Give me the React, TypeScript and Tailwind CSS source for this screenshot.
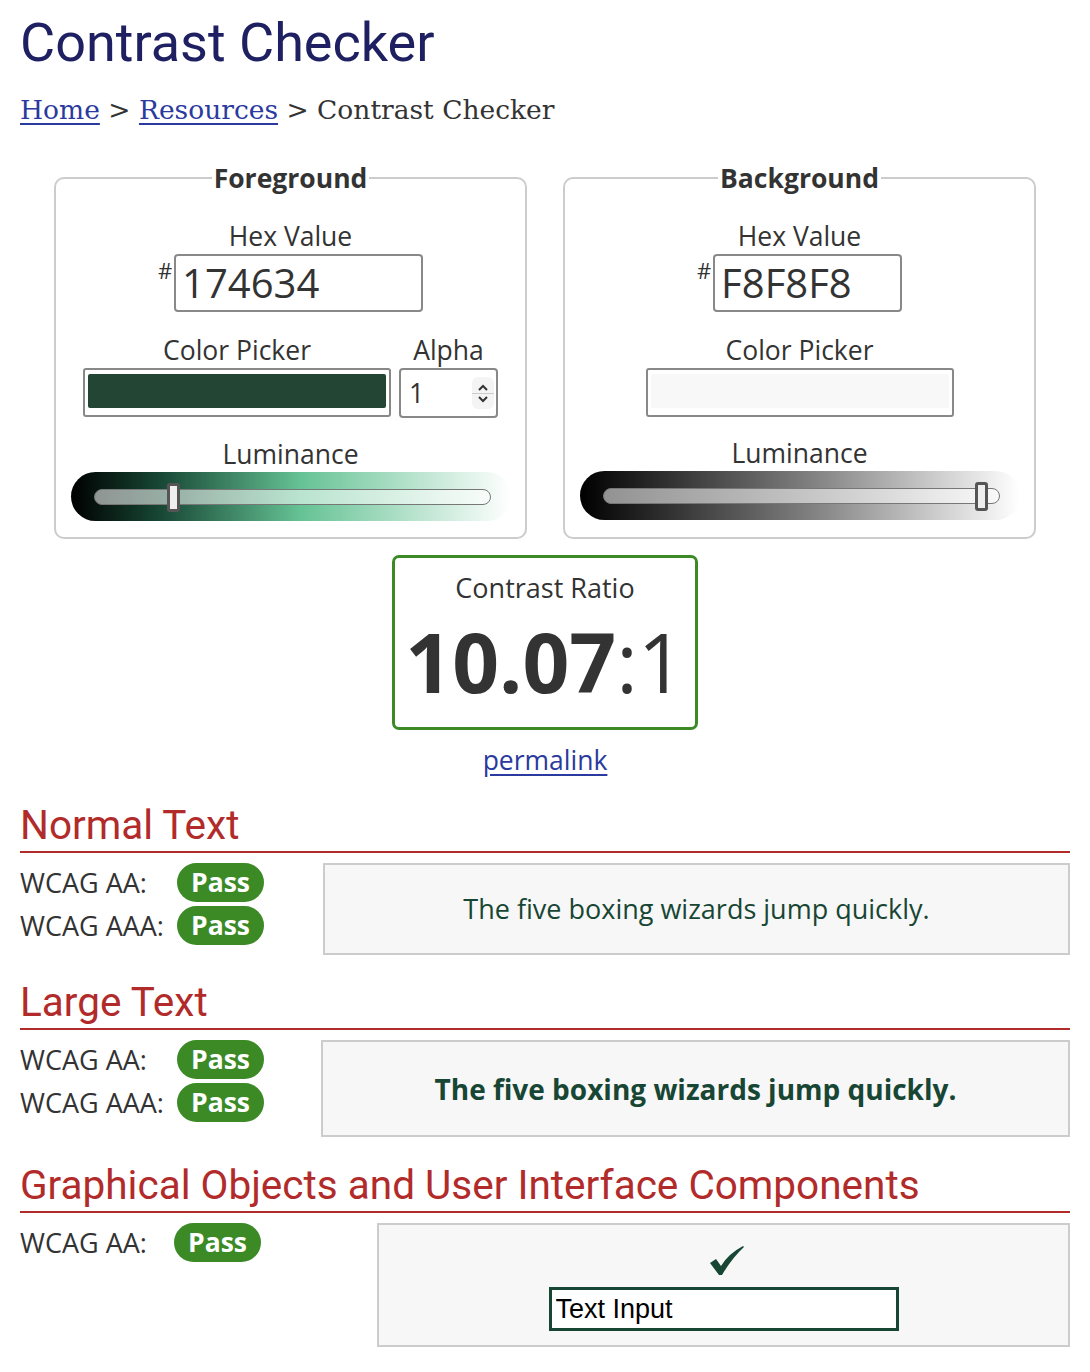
import React from "react";

const SAMPLE = "The five boxing wizards jump quickly.";

function PassBadge() {
  return (
    <span className="inline-flex h-[39px] w-[87px] items-center justify-center rounded-full bg-[#3b8a26] text-[26.5px] font-bold leading-none text-white">
      Pass
    </span>
  );
}

function Slider({ gradient, thumbLeft }: { gradient: string; thumbLeft: number }) {
  return (
    <div className={`mx-auto mt-[3px] flex h-[49px] w-[440px] items-center rounded-full pl-[23px] pr-[20px] ${gradient}`}>
      <div className="relative h-[16px] w-full rounded-full border border-[#777] bg-white/55">
        <span
          className="absolute top-[-7px] h-[29px] w-[13px] rounded-[3px] border-[3px] border-[#555] bg-[#eee]"
          style={{ left: thumbLeft }}
        />
      </div>
    </div>
  );
}

function Spinner() {
  return (
    <span className="flex h-[32px] w-[22px] flex-col items-center justify-center rounded-[6px] bg-[#f4f4f4]">
      <svg width="12" height="9" viewBox="0 0 12 9">
        <path d="M2 7 L6 3 L10 7" fill="none" stroke="#333" strokeWidth="2" />
      </svg>
      <span className="my-[1px] h-px w-full bg-[#ccc]" />
      <svg width="12" height="9" viewBox="0 0 12 9">
        <path d="M2 2 L6 6 L10 2" fill="none" stroke="#333" strokeWidth="2" />
      </svg>
    </span>
  );
}

function Label({ children, className = "" }: { children: React.ReactNode; className?: string }) {
  return <div className={`text-center text-[26.5px] leading-[30px] ${className}`}>{children}</div>;
}

function HexRow({ value, width }: { value: string; width: string }) {
  return (
    <div className="mt-[3px] flex items-start justify-center">
      <span className="mt-[5px] mr-[2px] text-[22px] leading-none">#</span>
      <input
        readOnly
        value={value}
        className={`h-[58px] ${width} rounded-[4px] border-2 border-[#888] bg-white px-[6px] text-[40px] text-[#333] outline-none`}
      />
    </div>
  );
}

function ResultSection({
  title,
  rows,
  leftWidth,
  labelWidth = "w-[157px]",
  box,
}: {
  title: string;
  rows: string[];
  leftWidth: string;
  labelWidth?: string;
  box: React.ReactNode;
}) {
  return (
    <section>
      <h2 className="border-b-2 border-[#b22b2b] pb-[4px] font-['Roboto',sans-serif] text-[40.5px] leading-[44px] text-[#b22b2b]">
        {title}
      </h2>
      <div className="mt-[10px] flex items-start">
        <div className={`flex ${leftWidth} flex-col gap-[4px]`}>
          {rows.map((r) => (
            <div key={r} className="flex items-center">
              <span className={`${labelWidth} text-[27px] leading-none`}>{r}</span>
              <PassBadge />
            </div>
          ))}
        </div>
        {box}
      </div>
    </section>
  );
}

export default function App() {
  return (
    <div className="min-h-screen bg-white px-[20px] pb-[20px] font-['Open_Sans',sans-serif] text-[#333]">
      <h1 className="pt-[16px] font-['Roboto',sans-serif] text-[54px] leading-[54px] text-[#1e2062]">Contrast Checker</h1>
      <nav className="mt-[22px] font-['DejaVu_Serif',serif] text-[26.5px] leading-[36px] text-[#333]">
        <a href="#" className="text-[#2a3a9e] underline underline-offset-[4px]">Home</a> &gt;{" "}
        <a href="#" className="text-[#2a3a9e] underline underline-offset-[4px]">Resources</a> &gt; Contrast Checker
      </nav>

      <div className="mt-[35px] flex justify-center gap-[36px]">
        <fieldset className="w-[473px] rounded-[10px] border-2 border-[#ccc] px-[14px] pb-[16px]">
          <legend className="mx-auto px-[2px] text-[26.5px] font-bold leading-[30px]">Foreground</legend>
          <Label className="mt-[28px]">Hex Value</Label>
          <HexRow value="174634" width="w-[249px]" />
          <div className="mt-[23px] flex justify-center gap-[8px]">
            <div className="flex flex-col">
              <Label>Color Picker</Label>
              <div className="mt-[3px] h-[49px] w-[308px] rounded-[3px] border-2 border-[#888] bg-white px-[3px] pt-[4px] pb-[7px]">
                <div className="h-full w-full rounded-[2px] bg-[#234634]" />
              </div>
            </div>
            <div className="flex flex-col">
              <Label>Alpha</Label>
              <div className="mt-[3px] flex h-[50px] w-[99px] items-center justify-between rounded-[4px] border-2 border-[#888] bg-white pl-[8px] pr-[2px]">
                <span className="text-[26.5px] leading-none">1</span>
                <Spinner />
              </div>
            </div>
          </div>
          <Label className="mt-[21px]">Luminance</Label>
          <Slider gradient="bg-[linear-gradient(to_right,#000_0%,#174634_20%,#65c294_52%,#ffffff_100%)]" thumbLeft={72} />
        </fieldset>

        <fieldset className="w-[473px] rounded-[10px] border-2 border-[#ccc] px-[14px] pb-[16px]">
          <legend className="mx-auto px-[2px] text-[26.5px] font-bold leading-[30px]">Background</legend>
          <Label className="mt-[28px]">Hex Value</Label>
          <HexRow value="F8F8F8" width="w-[189px]" />
          <div className="mt-[23px] flex justify-center">
            <div className="flex flex-col">
              <Label>Color Picker</Label>
              <div className="mt-[3px] h-[49px] w-[308px] rounded-[3px] border-2 border-[#888] bg-white px-[3px] pt-[4px] pb-[7px]">
                <div className="h-full w-full rounded-[2px] bg-[#f8f8f8]" />
              </div>
            </div>
          </div>
          <Label className="mt-[21px]">Luminance</Label>
          <Slider gradient="bg-[linear-gradient(to_right,#000_0%,#7a7a7a_50%,#ffffff_100%)]" thumbLeft={371} />
        </fieldset>
      </div>

      <div className="mt-[16px] flex flex-col items-center">
        <div className="flex h-[175px] w-[306px] flex-col items-center rounded-[7px] border-[3px] border-[#3b8a26] pt-[12px]">
          <div className="text-[27px] leading-[36px]">Contrast Ratio</div>
          <div className="mt-[14px] text-[82px] leading-none">
            <span className="font-bold">10.07</span>:1
          </div>
        </div>
        <a href="#" className="mt-[12px] text-[26.5px] leading-[36px] text-[#2a3a9e] underline underline-offset-[4px]">
          permalink
        </a>
      </div>

      <div className="mt-[25px]">
        <ResultSection
          title="Normal Text"
          rows={["WCAG AA:", "WCAG AAA:"]}
          leftWidth="w-[303px]"
          box={
            <div className="flex h-[92px] flex-1 items-center justify-center border-2 border-[#ccc] bg-[#f7f7f7] text-[27px] text-[#174634]">
              {SAMPLE}
            </div>
          }
        />
      </div>

      <div className="mt-[25px]">
        <ResultSection
          title="Large Text"
          rows={["WCAG AA:", "WCAG AAA:"]}
          leftWidth="w-[301px]"
          box={
            <div className="flex h-[97px] flex-1 items-center justify-center border-2 border-[#ccc] bg-[#f7f7f7] text-[28px] font-bold text-[#174634]">
              {SAMPLE}
            </div>
          }
        />
      </div>

      <div className="mt-[26px]">
        <ResultSection
          title="Graphical Objects and User Interface Components"
          rows={["WCAG AA:"]}
          leftWidth="w-[357px]"
          labelWidth="w-[154px]"
          box={
            <div className="flex h-[124px] flex-1 flex-col items-center border-2 border-[#ccc] bg-[#f7f7f7] pt-[21px]">
              <svg width="34" height="30" viewBox="0 0 34 30" className="ml-[6px]">
                <path d="M0 17 L6 13 L11 20 Q18 8 33 0 L34 1 Q22 12 12 29 L9 29 Z" fill="#174634" />
              </svg>
              <input
                readOnly
                value="Text Input"
                className="mt-[11px] h-[44px] w-[350px] border-[3px] border-[#174634] bg-white px-[4px] font-['Liberation_Sans',sans-serif] text-[27px] text-black outline-none"
              />
            </div>
          }
        />
      </div>
    </div>
  );
}
